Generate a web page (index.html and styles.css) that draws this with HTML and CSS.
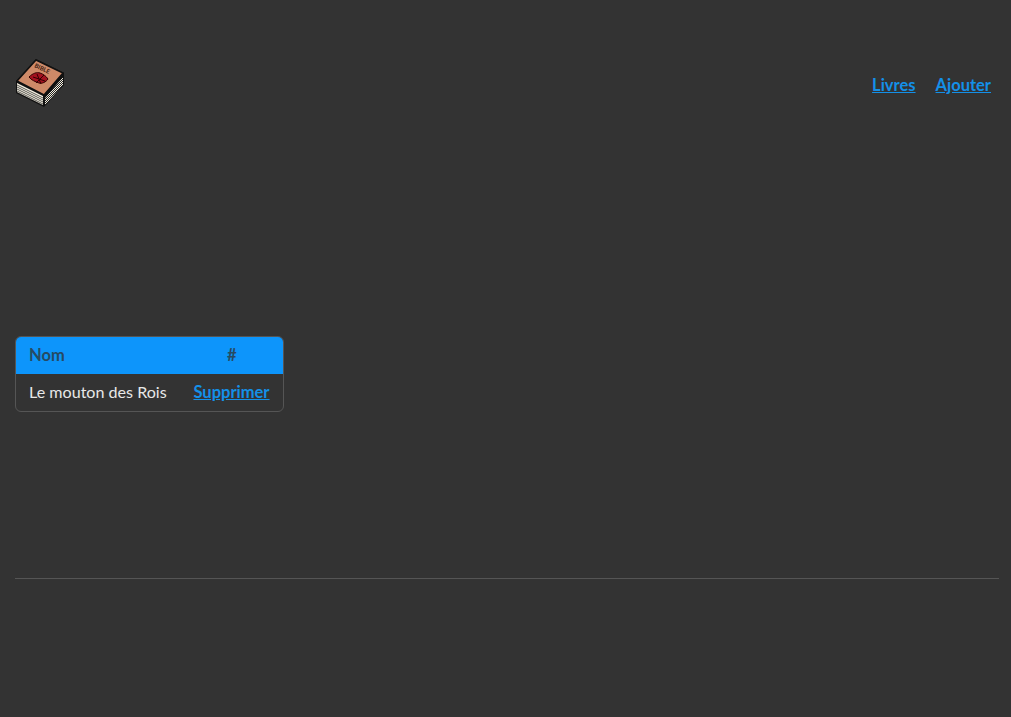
FILE: index.html
```html
<!DOCTYPE html>
<html lang="fr">
<head>
  <meta charset="UTF-8">
  <title>Livres</title>
  <link rel="stylesheet" href="styles.css">
</head>
<body>
  <header class="top">
    <a href="#" class="logo">
      <svg width="50" height="50" viewBox="0 0 50 50">
        <defs>
          <pattern id="dots" width="2" height="2" patternUnits="userSpaceOnUse">
            <rect width="2" height="2" fill="#f4efe0"/>
            <rect width="1" height="1" fill="#222"/>
            <rect x="1" y="1" width="1" height="1" fill="#222"/>
          </pattern>
        </defs>
        <polygon points="1,23 1,35 29,49 49,27 49,15 21,1" fill="#111"/>
        <polygon points="2,25 28,38 28,47 2,34" fill="#f4efe0"/>
        <g stroke="#333" stroke-width=".8" fill="none">
          <path d="M2 27l26 13M2 29l26 13M2 31l26 13M2 33l26 13"/>
        </g>
        <polygon points="30,40 48,19 48,27 30,47" fill="url(#dots)"/>
        <polygon points="21,2 48,15 29,37 2,23" fill="#cf8a68" stroke="#111" stroke-width="1.5"/>
        <path d="M14 19c4-4 8-5 11-4s6 3 8 6c-2 3-6 5-9 4s-8-3-10-6z" fill="#a3121f" stroke="#300" stroke-width="1"/>
        <path d="M18 19l12 4M22 16l4 10M29 17l-8 8" stroke="#300" stroke-width="1"/>
        <text x="19" y="9" transform="rotate(25 19 9)" class="logo-title">BIBLE</text>
      </svg>
    </a>
    <nav class="menu">
      <a href="#">Livres</a>
      <a href="#">Ajouter</a>
    </nav>
  </header>

  <main class="content">
    <table class="books">
      <thead>
        <tr>
          <th>Nom</th>
          <th class="center">#</th>
        </tr>
      </thead>
      <tbody>
        <tr>
          <td class="name">Le mouton des Rois</td>
          <td><a href="#">Supprimer</a></td>
        </tr>
      </tbody>
    </table>
  </main>

  <footer class="bottom"></footer>
</body>
</html>
```

FILE: styles.css
```css
* {
  box-sizing: border-box;
}

body {
  margin: 0;
  padding: 58px 12px 0 15px;
  min-height: 100vh;
  background-color: #333;
  color: #e8e8e8;
  font-family: 'Lato', sans-serif;
  font-size: 16px;
}

a {
  color: #1490e8;
  font-size: 16.5px;
  font-weight: 700;
}

.top {
  display: flex;
  justify-content: space-between;
  align-items: center;
  height: 50px;
}

.logo {
  display: block;
  height: 50px;
}

.logo-title {
  font-size: 6px;
  font-weight: 700;
  fill: #3a1a10;
}

.menu {
  display: flex;
  gap: 20px;
  padding-right: 8px;
  margin-top: 3px;
}

.content {
  padding-top: 228px;
}

.books {
  width: 269px;
  border: 1px solid #555;
  border-radius: 6px;
  border-spacing: 0;
  overflow: hidden;
}

.books th {
  height: 37px;
  padding: 0 13px 2px;
  background-color: #0d95fb;
  color: #264a63;
  font-size: 16.5px;
  font-weight: 700;
  text-align: left;
}

.books th.center {
  text-align: center;
}

.books td {
  height: 37px;
  padding: 0 13px 2px;
}

.books td.name {
  font-size: 16.1px;
  white-space: nowrap;
}

.bottom {
  margin-top: 166px;
  border-top: 1px solid #555;
}
```
